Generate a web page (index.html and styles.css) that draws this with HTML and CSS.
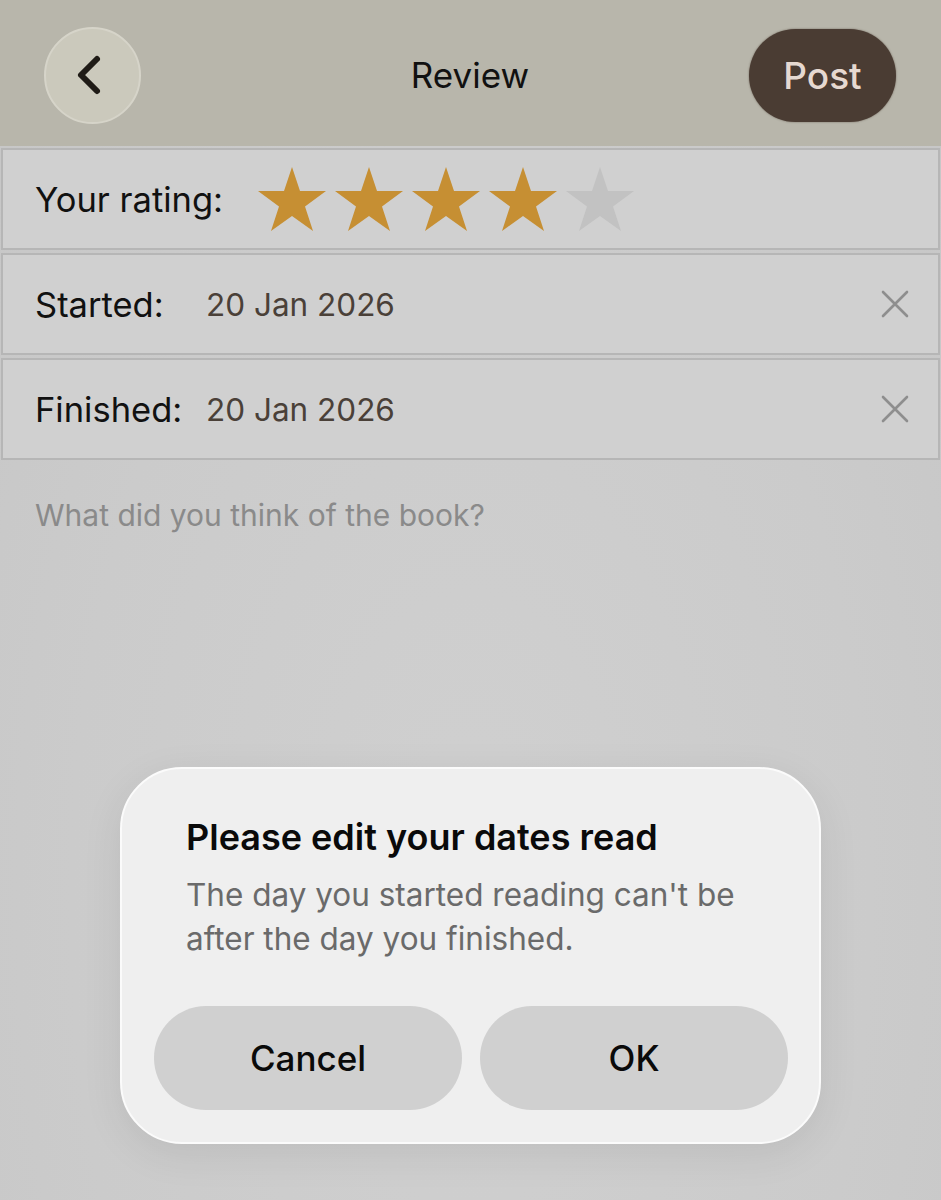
FILE: index.html
```html
<!DOCTYPE html>
<html lang="en">
<head>
	<meta charset="UTF-8">
	<title>Review</title>
	<link rel="stylesheet" href="styles.css">
</head>
<body>
<div class="screen">
  <div class="topbar">
    <div class="back-btn">
      <svg width="34" height="42" viewBox="0 0 34 42"><path d="M24 5 L8 21 L24 37" fill="none" stroke="#1f1b16" stroke-width="6" stroke-linecap="round" stroke-linejoin="round"/></svg>
    </div>
    <div class="title">Review</div>
    <div class="post-btn">Post</div>
  </div>

  <div class="row">
    <span class="label">Your rating:</span>
    <div class="stars">
      <svg class="star on" viewBox="0 0 68 64"><polygon points="34,0 42,24 68,24 47,39.5 55,64 34,49 13,64 21,39.5 0,24 26,24"/></svg>
      <svg class="star on" viewBox="0 0 68 64"><polygon points="34,0 42,24 68,24 47,39.5 55,64 34,49 13,64 21,39.5 0,24 26,24"/></svg>
      <svg class="star on" viewBox="0 0 68 64"><polygon points="34,0 42,24 68,24 47,39.5 55,64 34,49 13,64 21,39.5 0,24 26,24"/></svg>
      <svg class="star on" viewBox="0 0 68 64"><polygon points="34,0 42,24 68,24 47,39.5 55,64 34,49 13,64 21,39.5 0,24 26,24"/></svg>
      <svg class="star" viewBox="0 0 68 64"><polygon points="34,0 42,24 68,24 47,39.5 55,64 34,49 13,64 21,39.5 0,24 26,24"/></svg>
    </div>
  </div>
  <div class="row">
    <span class="label date-label">Started:</span>
    <span class="date">20 Jan 2026</span>
    <svg class="clear" width="28" height="28" viewBox="0 0 28 28"><path d="M2 2 L26 26 M26 2 L2 26" stroke="#8e8e8e" stroke-width="2.6" stroke-linecap="round"/></svg>
  </div>
  <div class="row">
    <span class="label date-label">Finished:</span>
    <span class="date">20 Jan 2026</span>
    <svg class="clear" width="28" height="28" viewBox="0 0 28 28"><path d="M2 2 L26 26 M26 2 L2 26" stroke="#8e8e8e" stroke-width="2.6" stroke-linecap="round"/></svg>
  </div>

  <div class="placeholder">What did you think of the book?</div>

  <div class="dialog">
    <div class="dialog-title">Please edit your dates read</div>
    <div class="dialog-text">The day you started reading can't be after the day you finished.</div>
    <div class="dialog-buttons">
      <div class="dlg-btn">Cancel</div>
      <div class="dlg-btn">OK</div>
    </div>
  </div>
</div>
</body>
</html>
```

FILE: styles.css
```css
body {
    margin: 0;
    background-color: #cccccc;
    font-family: Inter, "Noto Sans", sans-serif;
}
.screen {
    position: relative;
    width: 941px;
    height: 1200px;
    overflow: hidden;
    background: radial-gradient(ellipse at 50% 75%, #d0d0d0 0%, #cbcbcb 60%, #c6c6c6 100%);
}
.topbar {
    height: 146px;
    background-color: #b8b6ab;
    display: grid;
    grid-template-columns: 1fr auto 1fr;
    align-items: center;
    padding: 0 45px 0 44px;
    box-sizing: border-box;
}
.back-btn {
    width: 93px;
    height: 93px;
    border-radius: 50%;
    background-color: #cbc9bc;
    border: 2px solid #d6d4c9;
    display: flex;
    align-items: center;
    justify-content: center;
    margin-top: 4px;
}
.back-btn svg {
    margin-right: 6px;
}
.title {
    font-size: 35px;
    color: #111;
    margin-top: 4px;
}
.post-btn {
    justify-self: end;
    width: 147px;
    height: 93px;
    border-radius: 47px;
    background-color: #4a3c33;
    color: #e6d9d1;
    font-size: 37px;
    font-weight: 500;
    display: flex;
    align-items: center;
    justify-content: center;
    margin-top: 5px;
    box-shadow: 0 0 2px rgba(60,45,35,0.6);
}
.row {
    height: 102px;
    margin: 2px 0 3px 1px;
    width: 939px;
    box-sizing: border-box;
    border: 2px solid #b6b6b6;
    background-color: #d0d0d0;
    display: flex;
    align-items: center;
    padding: 0 29px 0 32px;
}
.row:first-of-type {
    margin-top: 0;
}
.label {
    font-size: 34.5px;
    color: #111;
}
.date-label {
    width: 171px;
}
.stars {
    display: flex;
    gap: 9px;
    margin-left: 35px;
}
.star {
    width: 68px;
    height: 64px;
    fill: #c2c2c2;
}
.star.on {
    fill: #c68f33;
}
.date {
    font-size: 31.5px;
    color: #4a4038;
    flex: 1;
}
.placeholder {
    padding: 34px 0 0 35px;
    font-size: 30px;
    color: #8a8a8a;
}
.dialog {
    position: absolute;
    left: 120px;
    top: 767px;
    width: 701px;
    height: 377px;
    box-sizing: border-box;
    background-color: #efefef;
    border: 2px solid #fbfbfb;
    border-radius: 62px;
    padding: 46px 20px 0 64px;
    box-shadow: 0 10px 40px rgba(0,0,0,0.08);
}
.dialog-title {
    font-size: 36px;
    font-weight: 600;
    color: #0a0a0a;
}
.dialog-text {
    font-size: 31.5px;
    color: #6a6a6a;
    line-height: 44px;
    margin-top: 14px;
    width: 600px;
}
.dialog-buttons {
    display: flex;
    gap: 18px;
    margin: 45px 0 0 -32px;
}
.dlg-btn {
    width: 308px;
    height: 104px;
    border-radius: 52px;
    background-color: #d0d0d0;
    display: flex;
    align-items: center;
    justify-content: center;
    font-size: 35px;
    font-weight: 500;
    color: #0a0a0a;
}
```
